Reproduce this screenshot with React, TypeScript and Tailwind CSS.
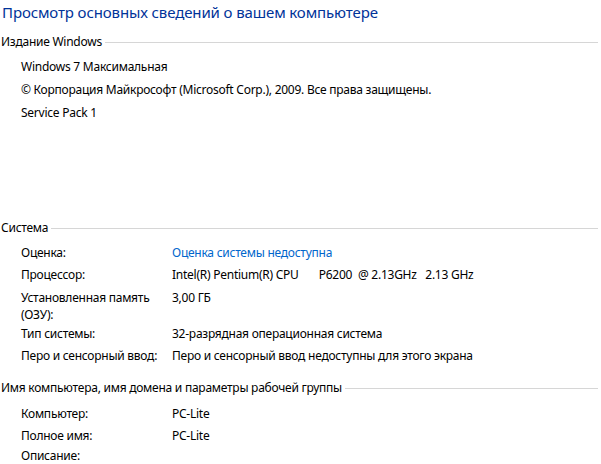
import React from 'react';

type Row = { label: string[]; value?: string; link?: boolean };

const systemRows: Row[] = [
  { label: ['Оценка:'], value: 'Оценка системы недоступна', link: true },
  { label: ['Процессор:'], value: 'Intel(R) Pentium(R) CPU       P6200  @ 2.13GHz   2.13 GHz' },
  { label: ['Установленная память', '(ОЗУ):'], value: '3,00 ГБ' },
  { label: ['Тип системы:'], value: '32-разрядная операционная система' },
  { label: ['Перо и сенсорный ввод:'], value: 'Перо и сенсорный ввод недоступны для этого экрана' },
];

const nameRows: Row[] = [
  { label: ['Компьютер:'], value: 'PC-Lite' },
  { label: ['Полное имя:'], value: 'PC-Lite' },
  { label: ['Описание:'] },
];

const SectionHeader: React.FC<{ title: string; className?: string }> = ({ title, className }) => (
  <div className={`flex items-center h-4 pl-px pr-[3px] ${className ?? ''}`}>
    <span className="whitespace-nowrap text-black">{title}</span>
    <div className="flex-1 h-px bg-[#d6d6d6] ml-[3px]" />
  </div>
);

const InfoRow: React.FC<{ row: Row; last?: boolean }> = ({ row, last }) => {
  const multi = row.label.length > 1;
  const size = multi ? 'h-[37px] pt-[3px] leading-[17px]' : last ? 'h-[18px] items-center' : 'h-[22px] items-center';
  return (
    <div className={`flex pl-[21px] ${size}`}>
      <div className="w-[151px] shrink-0">
        {row.label.map((l) => (
          <div key={l}>{l}</div>
        ))}
      </div>
      {row.value && (
        <div className={`whitespace-pre ${row.link ? 'text-[#0066cc]' : 'text-black'}`}>{row.value}</div>
      )}
    </div>
  );
};

const App: React.FC = () => {
  return (
    <div
      className="w-[601px] h-[464px] bg-white overflow-hidden text-[12px] tracking-[-0.25px] text-black"
      style={{ fontFamily: '"Segoe UI", "Noto Sans", "Open Sans", sans-serif' }}
    >
      <div className="h-6 flex items-center pl-[2px] text-[15px] tracking-[-0.12px] text-[#003399]">
        Просмотр основных сведений о вашем компьютере
      </div>

      <SectionHeader title="Издание Windows" className="mt-[10px]" />
      <div className="mt-[5px] pl-[21px]">
        <div className="h-[23px] flex items-center">Windows 7 Максимальная</div>
        <div className="h-[23px] flex items-center">© Корпорация Майкрософт (Microsoft Corp.), 2009. Все права защищены.</div>
        <div className="h-[23px] flex items-center">Service Pack 1</div>
      </div>

      <SectionHeader title="Система" className="mt-[96px]" />
      <div className="mt-[6px]">
        {systemRows.map((r) => (
          <InfoRow key={r.label[0]} row={r} />
        ))}
      </div>

      <SectionHeader title="Имя компьютера, имя домена и параметры рабочей группы" className="mt-[13px]" />
      <div className="mt-[7px]">
        {nameRows.map((r, i) => (
          <InfoRow key={r.label[0]} row={r} last={i === nameRows.length - 1} />
        ))}
      </div>
    </div>
  );
};

export default App;
